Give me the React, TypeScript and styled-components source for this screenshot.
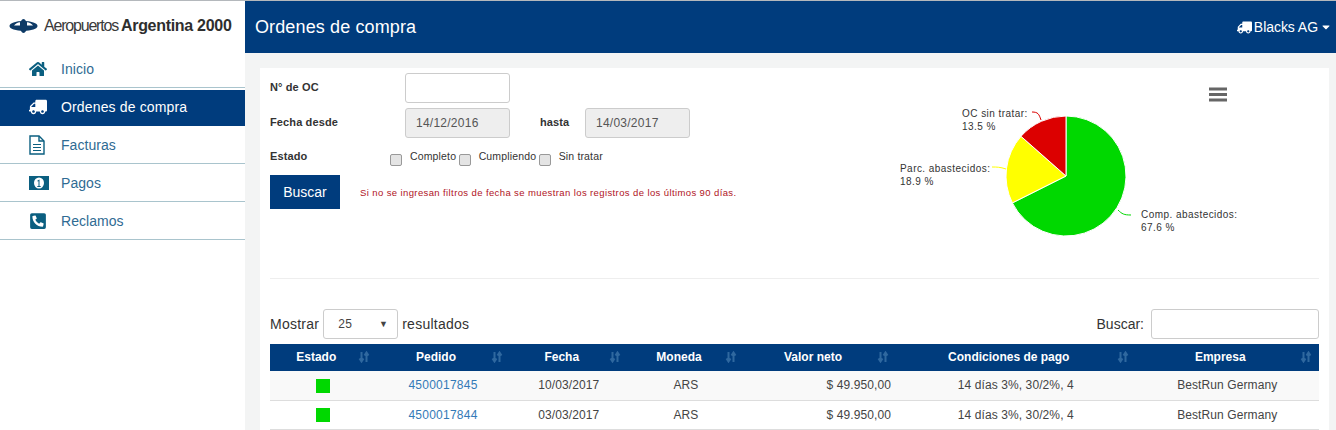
import React from "react";
import styled, { createGlobalStyle } from "styled-components";
import {
  FaHome,
  FaTruck,
  FaPhoneSquareAlt,
  FaCaretDown,
} from "react-icons/fa";

const NAVY = "#003c7d";

const GlobalStyle = createGlobalStyle`
  html, body {
    margin: 0;
    height: 430px;
    overflow: hidden;
    background: #f3f4f4;
    font-family: "Liberation Sans", Arial, sans-serif;
    color: #333;
  }
  * { box-sizing: border-box; }
`;

const Shell = styled.div`
  display: flex;
  height: 430px;
  border-top: 1px solid #b4b8bc;
`;

const Sidebar = styled.aside`
  width: 245px;
  flex-shrink: 0;
  background: #fff;
`;

const Brand = styled.div`
  height: 49px;
  display: flex;
  align-items: center;
  gap: 6px;
  padding: 0 0 0 9px;
`;

const BrandText = styled.span`
  font-size: 16px;
  letter-spacing: -1.2px;
  color: #3a3a3a;
  white-space: nowrap;
  b {
    font-weight: 700;
    margin-left: 3px;
    letter-spacing: -0.3px;
    color: #2e2e2e;
  }
`;

const NavList = styled.nav`
  display: flex;
  flex-direction: column;
`;

const NavItem = styled.a<{ $active?: boolean }>`
  height: ${(p) => (p.$active ? "36px" : "38px")};
  margin-top: ${(p) => (p.$active ? "2px" : "0")};
  padding-bottom: ${(p) => (p.$active ? "2px" : "0")};
  display: flex;
  align-items: center;
  padding-left: 29px;
  font-size: 14px;
  letter-spacing: ${(p) => (p.$active ? "0.15px" : "0.05px")};
  background: ${(p) => (p.$active ? NAVY : "transparent")};
  color: ${(p) => (p.$active ? "#fff" : "#2f6b93")};
  border-bottom: ${(p) => (p.$active ? "none" : "1px solid #a9c4cd")};
  svg {
    color: ${(p) => (p.$active ? "#fff" : "#0b5f80")};
  }
`;

const NavIcon = styled.span<{ $flip?: boolean }>`
  width: 32px;
  display: flex;
  align-items: center;
  font-size: 18px;
  transform: ${(p) => (p.$flip ? "scaleX(-1)" : "none")};
  justify-content: ${(p) => (p.$flip ? "flex-end" : "flex-start")};
`;

const Main = styled.main`
  flex: 1;
  min-width: 0;
  display: flex;
  flex-direction: column;
`;

const TopBar = styled.header`
  height: 52px;
  flex-shrink: 0;
  background: ${NAVY};
  color: #fff;
  display: flex;
  align-items: center;
  justify-content: space-between;
  padding: 0 4px 0 10px;
`;

const PageTitle = styled.h1`
  margin: 0;
  font-size: 18px;
  font-weight: 400;
  letter-spacing: 0.12px;
`;

const UserMenu = styled.div`
  display: flex;
  align-items: center;
  gap: 2px;
  font-size: 14px;
  letter-spacing: -0.05px;
`;

const FlippedTruck = styled(FaTruck)`
  transform: scaleX(-1);
  font-size: 15px;
`;

const Content = styled.div`
  padding: 15px 7px 0 15px;
`;

const Card = styled.section`
  background: #fff;
  padding: 5px 10px 0;
`;

const TopPanel = styled.div`
  display: flex;
  justify-content: space-between;
  height: 206px;
  border-bottom: 1px solid #eeeeee;
`;

const FilterForm = styled.form`
  display: flex;
  flex-direction: column;
  gap: 5px;
`;

const FormRow = styled.div`
  display: flex;
  align-items: center;
  height: 30px;
`;

const FieldLabel = styled.label<{ $width: number }>`
  width: ${(p) => p.$width}px;
  flex-shrink: 0;
  margin-top: -2px;
  font-size: 11px;
  font-weight: 700;
  letter-spacing: 0.12px;
`;

const EndDateLabel = styled(FieldLabel)`
  margin-left: 30px;
`;

const TextInput = styled.input`
  width: 105px;
  height: 30px;
  border: 1px solid #ccc;
  border-radius: 3px;
  background: ${(p) => (p.disabled ? "#eeeeee" : "#fff")};
  color: #555;
  font: 12px "Liberation Sans", Arial, sans-serif;
  letter-spacing: 0.25px;
  padding: 0 10px;
  &:disabled {
    opacity: 1;
    -webkit-text-fill-color: #555;
  }
`;

const StatusRow = styled.div`
  display: flex;
  align-items: center;
  height: 26px;
`;

const StatusLabel = styled(FieldLabel)`
  margin-top: 0;
  margin-right: -15px;
`;

const StatusOption = styled.label`
  display: flex;
  align-items: center;
  font-size: 10.5px;
  letter-spacing: 0.15px;
  color: #333;
  span {
    margin-left: 5px;
    margin-right: -0.5px;
  }
`;

const Check = styled.input.attrs({ type: "checkbox" })`
  appearance: none;
  width: 12px;
  height: 12px;
  margin: 7px 3px 0;
  border: 1px solid #999;
  border-radius: 2px;
  background: #e4e4e4;
`;

const SearchRow = styled.div`
  display: flex;
  align-items: center;
  gap: 20px;
  margin-top: 1px;
`;

const SearchButton = styled.button`
  width: 70px;
  height: 34px;
  border: none;
  background: ${NAVY};
  color: #fff;
  font: 14px "Liberation Sans", Arial, sans-serif;
`;

const Hint = styled.span`
  font-size: 9.5px;
  letter-spacing: 0.39px;
  color: #b0141e;
  white-space: nowrap;
`;

const ChartSvg = styled.svg`
  width: 439px;
  height: 200px;
  margin-top: -5px;
  flex-shrink: 0;
  text {
    font-family: "Liberation Sans", Arial, sans-serif;
    font-size: 10px;
    letter-spacing: 0.45px;
    fill: #333;
  }
`;

const TableTools = styled.div`
  display: flex;
  justify-content: space-between;
  align-items: center;
  height: 30px;
  margin-top: 30px;
  font-size: 14px;
`;

const ToolGroup = styled.div<{ $spacing?: number }>`
  display: flex;
  align-items: center;
  gap: 4px;
  letter-spacing: ${(p) => p.$spacing ?? 0}px;
`;

const PageSize = styled.div`
  width: 75px;
  height: 30px;
  border: 1px solid #ccc;
  border-radius: 3px;
  display: flex;
  align-items: center;
  justify-content: space-between;
  padding: 0 9px 0 14px;
  font-size: 12px;
  color: #444;
  i {
    font-style: normal;
    font-size: 9px;
  }
`;

const SearchBox = styled.input`
  width: 168px;
  height: 30px;
  margin-left: 3px;
  border: 1px solid #ccc;
  border-radius: 3px;
`;

const OrdersTable = styled.table`
  width: 100%;
  margin-top: 5px;
  border-collapse: collapse;
  table-layout: fixed;
  font-size: 12px;
`;

const HeadCell = styled.th<{ $width: number }>`
  position: relative;
  width: ${(p) => p.$width}px;
  height: 27px;
  padding: 0 24px 2px 10px;
  background: ${NAVY};
  color: #fff;
  font-size: 12px;
  font-weight: 700;
  text-align: center;
`;

const SortIcon = styled.svg`
  position: absolute;
  right: 7px;
  top: 7px;
  width: 12px;
  height: 12px;
  color: #2f689f;
`;

const Row = styled.tr<{ $odd?: boolean }>`
  background: ${(p) => (p.$odd ? "#f9f9f9" : "#fff")};
`;

const Cell = styled.td<{ $right?: boolean }>`
  height: 29px;
  padding: ${(p) => (p.$right ? "0 5px 0 6px" : "0 6px")};
  text-align: ${(p) => (p.$right ? "right" : "center")};
  border-bottom: 1px solid #ddd;
  letter-spacing: 0.1px;
  color: #444;
`;

const StatusSquare = styled.span`
  display: inline-block;
  width: 14px;
  height: 14px;
  background: #00d800;
  vertical-align: middle;
`;

const OrderLink = styled.a`
  color: #337ab7;
  letter-spacing: 0.25px;
`;

const FileIcon = () => (
  <svg width="16" height="20" viewBox="0 0 16 20" fill="none" stroke="currentColor" strokeWidth="1.4">
    <path d="M1 1h9l5 5v13H1z" />
    <path d="M10 1v5h5" />
    <path d="M4 9.500h8M4 12.500h8M4 15.500h8" strokeWidth="1.2" />
  </svg>
);

const BillIcon = () => (
  <svg width="20" height="14" viewBox="0 0 20 14">
    <path d="M0 0h20v14H0z" fill="currentColor" />
    <ellipse cx="10" cy="7" rx="5" ry="5.500" fill="#fff" />
    <path d="M8.500 4.500l2-1v6.500h1.200v1H8.300v-1h1.200V5.200l-1 .4z" fill="currentColor" />
  </svg>
);

const pieData = [
  { value: 67.6, color: "#00d800" },
  { value: 18.9, color: "#ffff00" },
  { value: 13.5, color: "#dc0000" },
];

// chart svg origin is at 880,68 on the page
const pieCenter = { x: 186, y: 108 };
const pieRadius = 60;

const slicePath = (from: number, to: number) => {
  const point = (pct: number) => {
    const angle = (pct / 100) * 2 * Math.PI;
    return `${pieCenter.x + pieRadius * Math.sin(angle)} ${pieCenter.y - pieRadius * Math.cos(angle)}`;
  };
  const large = to - from > 50 ? 1 : 0;
  return `M${pieCenter.x} ${pieCenter.y}L${point(from)}A${pieRadius} ${pieRadius} 0 ${large} 1 ${point(to)}Z`;
};

const PieChart = () => {
  let start = 0;
  return (
    <ChartSvg viewBox="0 0 439 200">
      {pieData.map((slice) => {
        const d = slicePath(start, start + slice.value);
        start += slice.value;
        return <path key={slice.color} d={d} fill={slice.color} stroke="#fff" strokeWidth="1" />;
      })}
      <path d="M152 44c6 0 7 2 9 8" fill="none" stroke="#dc0000" />
      <path d="M112 99c5 0 8 0 14 2" fill="none" stroke="#ffff00" />
      <path d="M238 142c4 4 6 5 13 5" fill="none" stroke="#00d800" />
      <text x="82" y="49">OC sin tratar:</text>
      <text x="82" y="62">13.5 %</text>
      <text x="20" y="104">Parc. abastecidos:</text>
      <text x="20" y="117">18.9 %</text>
      <text x="261" y="150">Comp. abastecidos:</text>
      <text x="261" y="163">67.6 %</text>
      <path d="M329 21h18M329 26.500h18M329 32h18" stroke="#666" strokeWidth="3" />
    </ChartSvg>
  );
};

const columns = [
  { title: "Estado", width: 106.5 },
  { title: "Pedido", width: 133 },
  { title: "Fecha", width: 118.5 },
  { title: "Moneda", width: 116 },
  { title: "Valor neto", width: 152 },
  { title: "Condiciones de pago", width: 239.5 },
  { title: "Empresa", width: 183.5 },
];

const orders = [
  { id: "4500017845", date: "10/03/2017" },
  { id: "4500017844", date: "03/03/2017" },
];

const navItems = [
  { label: "Inicio", icon: <FaHome /> },
  { label: "Ordenes de compra", icon: <FaTruck />, active: true, flip: true },
  { label: "Facturas", icon: <FileIcon /> },
  { label: "Pagos", icon: <BillIcon /> },
  { label: "Reclamos", icon: <FaPhoneSquareAlt /> },
];

const App = () => {
  return (
    <Shell>
      <GlobalStyle />
      <Sidebar>
        <Brand>
          <svg width="29" height="14" viewBox="0 0 29 14">
            <ellipse cx="14.500" cy="7" rx="14" ry="5" fill="#0d3a66" />
            <path d="M5 6.500C6.500 4.500 8.500 3.500 11 3.300V6.500zM24 6.500C22.500 4.500 20.500 3.500 18 3.300V6.500z" fill="#fff" />
            <ellipse cx="14.500" cy="7" rx="3.500" ry="7" fill="#0d3a66" />
          </svg>
          <BrandText>
            Aeropuertos<b>Argentina 2000</b>
          </BrandText>
        </Brand>
        <NavList>
          {navItems.map((item) => (
            <NavItem key={item.label} $active={item.active}>
              <NavIcon $flip={item.flip}>{item.icon}</NavIcon>
              {item.label}
            </NavItem>
          ))}
        </NavList>
      </Sidebar>
      <Main>
        <TopBar>
          <PageTitle>Ordenes de compra</PageTitle>
          <UserMenu>
            <FlippedTruck />
            Blacks AG
            <FaCaretDown size={12} />
          </UserMenu>
        </TopBar>
        <Content>
          <Card>
            <TopPanel>
              <FilterForm>
                <FormRow>
                  <FieldLabel $width={135}>N° de OC</FieldLabel>
                  <TextInput />
                </FormRow>
                <FormRow>
                  <FieldLabel $width={135}>Fecha desde</FieldLabel>
                  <TextInput disabled value="14/12/2016" readOnly />
                  <EndDateLabel $width={45}>hasta</EndDateLabel>
                  <TextInput disabled value="14/03/2017" readOnly />
                </FormRow>
                <StatusRow>
                  <StatusLabel $width={132}>Estado</StatusLabel>
                  <StatusOption>
                    <Check />
                    <span>Completo</span>
                  </StatusOption>
                  <StatusOption>
                    <Check />
                    <span>Cumpliendo</span>
                  </StatusOption>
                  <StatusOption>
                    <Check />
                    <span>Sin tratar</span>
                  </StatusOption>
                </StatusRow>
                <SearchRow>
                  <SearchButton type="button">Buscar</SearchButton>
                  <Hint>
                    Si no se ingresan filtros de fecha se muestran los registros
                    de los últimos 90 días.
                  </Hint>
                </SearchRow>
              </FilterForm>
              <PieChart />
            </TopPanel>
            <TableTools>
              <ToolGroup $spacing={0.25}>
                Mostrar
                <PageSize>
                  25 <i>▼</i>
                </PageSize>
                resultados
              </ToolGroup>
              <ToolGroup>
                Buscar:
                <SearchBox />
              </ToolGroup>
            </TableTools>
            <OrdersTable>
              <thead>
                <tr>
                  {columns.map((col) => (
                    <HeadCell key={col.title} $width={col.width}>
                      {col.title}
                      <SortIcon viewBox="0 0 12 12" fill="none" stroke="currentColor" strokeWidth="2">
                        <path d="M3.500 1v8M1.500 7.500l2 3 2-3" />
                        <path d="M8.500 11V3M6.500 4.500l2-3 2 3" />
                      </SortIcon>
                    </HeadCell>
                  ))}
                </tr>
              </thead>
              <tbody>
                {orders.map((order, idx) => (
                  <Row key={order.id} $odd={idx % 2 === 0}>
                    <Cell>
                      <StatusSquare />
                    </Cell>
                    <Cell>
                      <OrderLink>{order.id}</OrderLink>
                    </Cell>
                    <Cell>{order.date}</Cell>
                    <Cell>ARS</Cell>
                    <Cell $right>$ 49.950,00</Cell>
                    <Cell>14 días 3%, 30/2%, 4</Cell>
                    <Cell>BestRun Germany</Cell>
                  </Row>
                ))}
              </tbody>
            </OrdersTable>
          </Card>
        </Content>
      </Main>
    </Shell>
  );
};

export default App;
